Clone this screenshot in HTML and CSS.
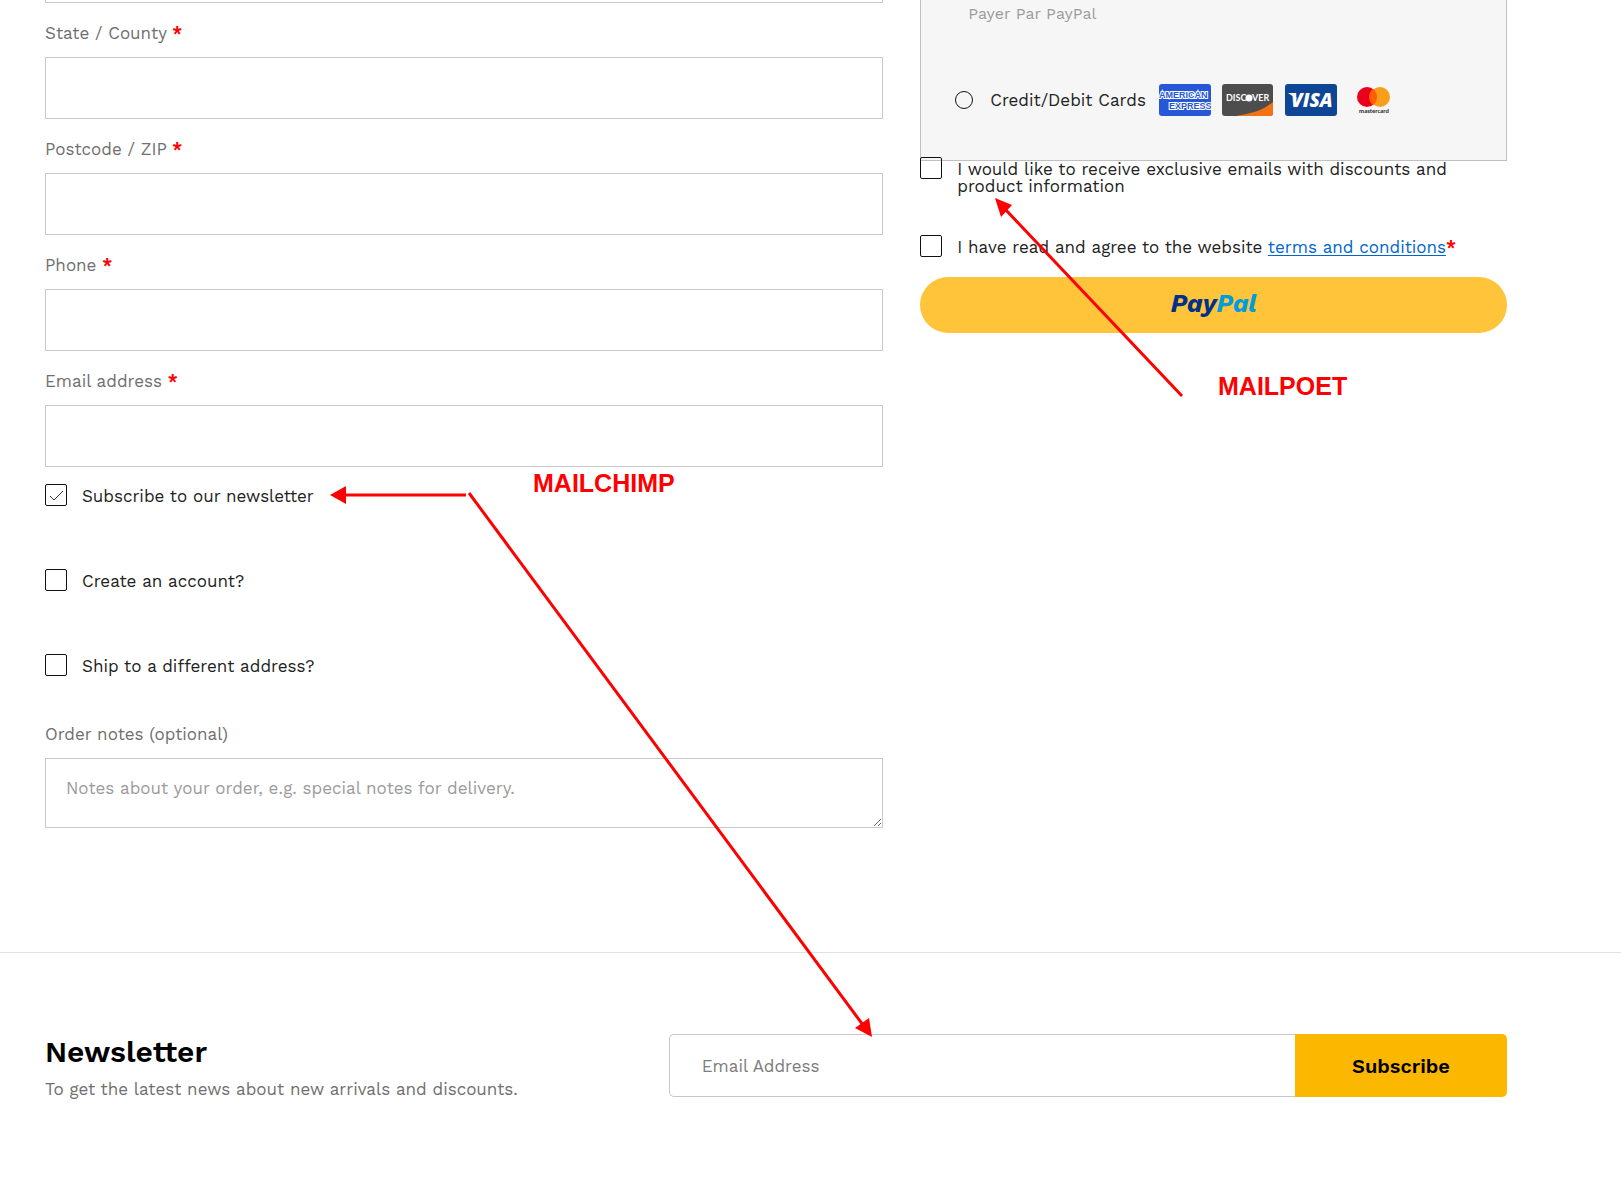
FILE: index.html
```html
<!DOCTYPE html>
<html lang="en">
<head>
  <meta charset="UTF-8">
  <meta name="viewport" content="width=device-width, initial-scale=1.0">
  <title>Checkout</title>
  <link rel="stylesheet" href="styles.css">
</head>
<body>
  <div class="page">
    <main class="checkout">
      <form class="billing">
        <input class="field" type="text" id="city" aria-label="Town / City">

        <label class="field-label" for="state">State / County <abbr>*</abbr></label>
        <input class="field" type="text" id="state">

        <label class="field-label" for="postcode">Postcode / ZIP <abbr>*</abbr></label>
        <input class="field" type="text" id="postcode">

        <label class="field-label" for="phone">Phone <abbr>*</abbr></label>
        <input class="field" type="tel" id="phone">

        <label class="field-label" for="email">Email address <abbr>*</abbr></label>
        <input class="field" type="email" id="email">

        <div class="options">
          <div class="check-row">
            <input type="checkbox" id="subscribe" checked>
            <label for="subscribe">Subscribe to our newsletter</label>
          </div>
          <div class="check-row">
            <input type="checkbox" id="account">
            <label for="account">Create an account?</label>
          </div>
          <div class="check-row">
            <input type="checkbox" id="ship">
            <label for="ship">Ship to a different address?</label>
          </div>
        </div>

        <label class="field-label" for="notes">Order notes (optional)</label>
        <textarea class="field notes" id="notes" placeholder="Notes about your order, e.g. special notes for delivery."></textarea>
      </form>

      <form class="order">
        <div class="payment">
          <p class="payment-desc">Payer Par PayPal</p>
          <div class="payment-method">
            <input type="radio" id="cards" name="payment">
            <label for="cards">Credit/Debit Cards</label>
            <div class="card-icons">
              <svg width="52" height="32" viewBox="0 0 52 32" role="img" aria-label="American Express">
                <rect width="52" height="32" rx="3" fill="#2557d6"/>
                <text class="amex" x="0" y="14">AMERICAN</text>
                <text class="amex" x="10" y="25">EXPRESS</text>
              </svg>
              <svg width="52" height="32" viewBox="0 0 52 32" role="img" aria-label="Discover">
                <rect width="51" height="32" rx="3" fill="#4d4d4d"/>
                <path d="M14 32C29 30 42 26 51 18v11a3 3 0 0 1-3 3z" fill="#f47216"/>
                <text class="discover" x="4" y="17">DISC</text>
                <circle cx="27" cy="14" r="3.5" fill="#fff"/>
                <text class="discover" x="30" y="17">VER</text>
              </svg>
              <svg width="52" height="32" viewBox="0 0 52 32" role="img" aria-label="Visa">
                <rect width="52" height="32" rx="3" fill="#0e4595"/>
                <path d="M3 9h6l3 6z" fill="#fff"/>
                <text class="visa" x="6" y="23">VISA</text>
              </svg>
              <svg width="52" height="32" viewBox="0 0 52 32" role="img" aria-label="Mastercard">
                <circle cx="19" cy="13" r="10" fill="#eb001b"/>
                <circle cx="32" cy="13" r="10" fill="#f79e1b"/>
                <path d="M25 5a10 10 0 0 1 0 16a10 10 0 0 1 0-16z" fill="#ff5f00"/>
                <text class="mastercard" x="26" y="29" text-anchor="middle">mastercard</text>
              </svg>
            </div>
          </div>
        </div>

        <div class="check-row offers">
          <input type="checkbox" id="offers">
          <label for="offers">I would like to receive exclusive emails with discounts and product information</label>
        </div>
        <div class="check-row terms">
          <input type="checkbox" id="terms">
          <label for="terms">I have read and agree to the website <a href="#">terms and conditions</a><abbr>*</abbr></label>
        </div>
        <button class="paypal" type="button"><span class="pay">Pay</span><span class="pal">Pal</span></button>
      </form>
    </main>

    <footer class="newsletter">
      <div class="newsletter-text">
        <h2>Newsletter</h2>
        <p>To get the latest news about new arrivals and discounts.</p>
      </div>
      <form class="newsletter-form">
        <input type="email" placeholder="Email Address" aria-label="Email Address">
        <button type="button">Subscribe</button>
      </form>
    </footer>

    <!-- Notes drawn over the page -->
    <svg class="notes-layer" aria-hidden="true">
      <g stroke="#f00" stroke-width="3">
        <path d="M1182 396L1004 208"/>
        <path d="M466 495H344"/>
        <path d="M469 493L863 1025"/>
      </g>
      <g fill="#f00">
        <path d="M995 198L1012 205L1001 217z"/>
        <path d="M330 495L346 486V504z"/>
        <path d="M872 1037L855 1028L869 1018z"/>
      </g>
      <text class="note" x="533" y="492">MAILCHIMP</text>
      <text class="note" x="1218" y="395">MAILPOET</text>
    </svg>
  </div>
</body>
</html>
```

FILE: styles.css
```css
* {
  box-sizing: border-box;
}
body {
  margin: 0;
  background-color: #fff;
  color: #222;
  font-family: "Work Sans", Inter, sans-serif;
  font-size: 17px;
}
h2, p {
  margin: 0;
}
input, textarea, button {
  font: inherit;
  margin: 0;
}
abbr {
  color: #f00;
  font-weight: 700;
}
.page {
  position: relative;
  overflow: hidden;
}
.checkout {
  display: grid;
  grid-template-columns: 10fr 7fr;
  gap: 37px;
  align-items: start;
  margin-top: -59px; /* scrolled past the first fields */
  padding: 0 114px 124px 45px;
}

/* Billing fields */
.field {
  display: block;
  width: 100%;
  height: 62px;
  padding: 0 20px;
  border: 1px solid #c8c8c8;
  border-radius: 0;
  background-color: #fff;
}
.field-label {
  display: block;
  padding: 17px 0 10px;
  line-height: 27px;
  color: #6f6f6f;
}
.notes {
  height: 70px;
  padding: 16px 20px;
  line-height: 27px;
  resize: vertical;
}
.notes::placeholder {
  color: #9b9b9b;
}
.options {
  display: flex;
  flex-direction: column;
  gap: 63px;
  padding: 17px 0 28px;
}
.check-row {
  display: flex;
  align-items: flex-start;
  gap: 15px;
}
.check-row label {
  line-height: 17px;
  padding-top: 4px;
}
.check-row input {
  appearance: none;
  flex: none;
  width: 22px;
  height: 22px;
  border: 1px solid #111;
  border-radius: 2px;
}
.check-row input:checked {
  background: url("data:image/svg+xml,%3Csvg xmlns='http://www.w3.org/2000/svg' viewBox='0 0 20 20'%3E%3Cpath d='M4 11l4 4 9-9' fill='none' stroke='%23333'/%3E%3C/svg%3E") center / 20px no-repeat;
}

/* Payment box */
.payment {
  padding: 61px 34px 44px;
  border: 1px solid #c0c0c0;
  border-top: none;
  background-color: #f6f6f6;
}
.payment-desc {
  padding-left: 13px;
  font-size: 16px;
  line-height: 24px;
  color: #9b9b9b;
}
.payment-method {
  display: flex;
  align-items: center;
  margin-top: 58px;
}
.payment-method input {
  appearance: none;
  width: 18px;
  height: 18px;
  border: 1px solid #111;
  border-radius: 50%;
}
.payment-method label {
  margin: 0 13px 0 17px;
}
.card-icons {
  display: flex;
  gap: 11px;
}
.amex {
  font: 700 9px "Liberation Sans", sans-serif;
  fill: #2557d6;
  stroke: #fff;
  stroke-width: 2px;
  paint-order: stroke;
}
.discover {
  font: 700 9px Lato, sans-serif;
  fill: #fff;
}
.visa {
  font: italic 900 19px "Open Sans", sans-serif;
  fill: #fff;
}
.mastercard {
  font: 700 6px Lato, sans-serif;
  fill: #222;
}
.offers {
  margin-top: -4px;
}
.terms {
  margin-top: 40px;
}
.terms a {
  color: #06c;
  text-underline-offset: 2px;
}
.paypal {
  display: block;
  width: 100%;
  height: 56px;
  margin-top: 20px;
  padding-bottom: 4px;
  border: none;
  border-radius: 28px;
  background-color: #ffc439;
  font: italic 700 25px "Work Sans", sans-serif;
  cursor: pointer;
}
.pay {
  color: #003087;
}
.pal {
  color: #009cde;
}

/* Newsletter */
.newsletter {
  display: grid;
  grid-template-columns: 7fr 10fr;
  gap: 37px;
  padding: 81px 114px 70px 45px;
  border-top: 1px solid #e1e1e1;
}
.newsletter h2 {
  color: #000;
  font-size: 30px;
  font-weight: 600;
  line-height: 36px;
}
.newsletter p {
  margin-top: 6px;
  line-height: 27px;
  color: #6f6f6f;
}
.newsletter-form {
  display: flex;
  height: 63px;
}
.newsletter-form input {
  flex: 1;
  min-width: 0;
  padding: 0 32px;
  border: 1px solid #c8c8c8;
  border-right: none;
  border-radius: 5px 0 0 5px;
}
.newsletter-form input::placeholder {
  color: #7c7c7c;
}
.newsletter-form button {
  width: 212px;
  border: none;
  border-radius: 0 5px 5px 0;
  background-color: #fcb800;
  color: #000;
  font-size: 20px;
  font-weight: 600;
  cursor: pointer;
}

.notes-layer {
  position: absolute;
  top: 0;
  left: 0;
  width: 100%;
  height: 100%;
  pointer-events: none;
}
.note {
  font: 700 25px "Liberation Sans", Arial, sans-serif;
  fill: #f00;
}
```
